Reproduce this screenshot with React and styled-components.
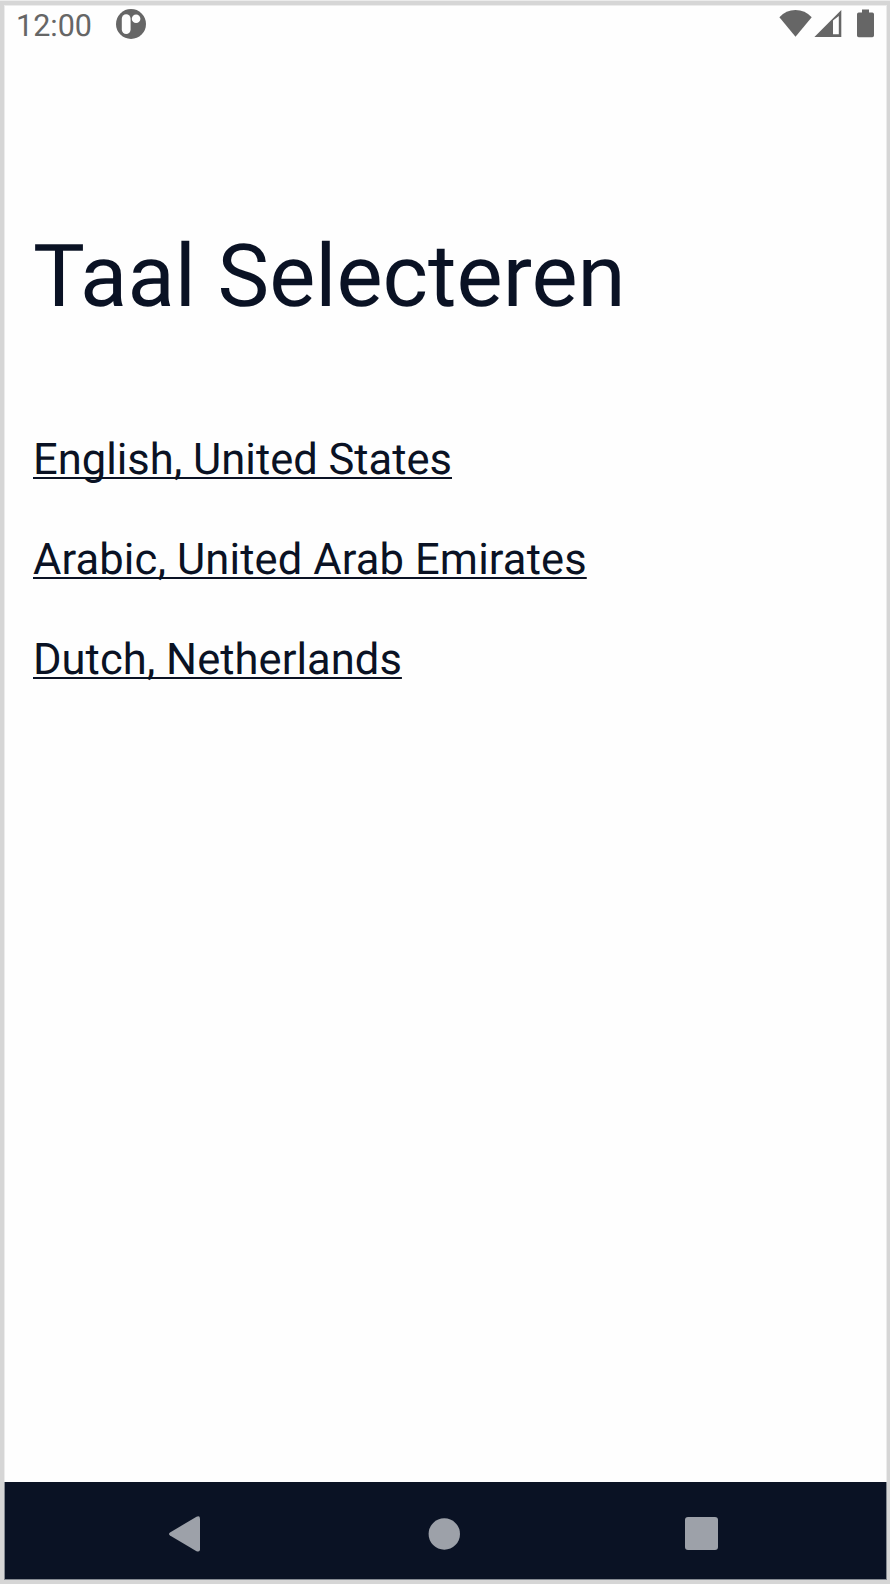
import React from 'react';
import styled, { createGlobalStyle } from 'styled-components';

const Global = createGlobalStyle`
  * { box-sizing: border-box; }
  body { margin: 0; background: #d6d6d6; font-family: Roboto, sans-serif; text-rendering: geometricPrecision; }
`;

const Device = styled.div`
  width: 890px;
  height: 1584px;
  padding: 4px 3px 4px 4px;
  border-top: 1px solid #ececec;
  background: #d6d6d6;
  display: flex;
`;

const Screen = styled.div`
  flex: 1;
  display: flex;
  flex-direction: column;
  background: #fefefe;
  border: 1px solid #ececec;
  border-bottom: 0;
`;

const StatusBar = styled.header`
  height: 40px;
  padding: 0 11px;
  display: flex;
  justify-content: space-between;
  color: #666;
`;

const StatusGroup = styled.div`
  display: flex;
  align-items: flex-start;
`;

const Clock = styled.span`
  width: 99px;
  font-size: 30.5px;
  line-height: 42px;
`;

const StatusIcon = styled.svg`
  display: block;
  flex: none;
  fill: currentColor;
`;

const Content = styled.main`
  flex: 1;
  padding: 181px 28px 0;
  color: #0a1224;
`;

const Title = styled.h1`
  margin: 0 0 107px;
  font-size: 87px;
  font-weight: 400;
  line-height: 100px;
`;

const LanguageList = styled.nav`
  display: flex;
  flex-direction: column;
  align-items: flex-start;
  gap: 48px;
`;

const LanguageLink = styled.a`
  font-size: 43.5px;
  line-height: 52px;
  letter-spacing: ${({ $tracking }) => $tracking || 0}px;
  color: inherit;
  white-space: nowrap;
  text-decoration: underline;
  text-decoration-thickness: 2px;
  text-decoration-skip-ink: none;
  text-underline-offset: 3px;
`;

const NavBar = styled.footer`
  height: 98px;
  margin: 0 -1px;
  border: solid #858a92;
  border-width: 0 1px 1px;
  background: #0a1224;
  color: #9da1a9;
  display: grid;
  grid-template-columns: 259px 257px 33px;
  align-items: center;
  padding: 6px 0 0 164px;
`;

const NavButton = styled.button`
  border: 0;
  padding: 0;
  background: none;
  color: inherit;
  display: flex;
`;

const languages = [
  { name: 'English, United States' },
  { name: 'Arabic, United Arab Emirates', tracking: 0.12 },
  { name: 'Dutch, Netherlands', tracking: 0.04 },
];

export default function App() {
  return (
    <>
      <Global />
      <Device>
        <Screen>
          <StatusBar>
            <StatusGroup>
              <Clock>12:00</Clock>
              <StatusIcon width="32" height="36" viewBox="115 6 32 36">
                <circle cx="131" cy="24" r="15" />
                <rect x="121.8" y="14.3" width="8.8" height="19.7" rx="4.4" fill="#fefefe" />
                <circle cx="136.1" cy="18.7" r="4.3" fill="#fefefe" />
              </StatusIcon>
            </StatusGroup>
            <StatusGroup>
              <StatusIcon width="96" height="36" viewBox="779 6 96 36">
                <path d="M779.4 17.2Q786 10 795.5 10T811.7 17.2L795.5 36.7Z" />
                <path fillRule="evenodd" d="M814.4 37L841.3 10V37ZM833 20.5V34.3H838.8V16Z" />
                <path d="M862 9.5h7v3h3.3q1.7 0 1.7 1.7v21.2q0 1.8-1.7 1.8h-13.6q-1.7 0-1.7-1.8V14.2q0-1.7 1.7-1.7H862Z" />
              </StatusIcon>
            </StatusGroup>
          </StatusBar>
          <Content>
            <Title>Taal Selecteren</Title>
            <LanguageList>
              {languages.map(({ name, tracking }) => (
                <LanguageLink key={name} href="#" $tracking={tracking}>{name}</LanguageLink>
              ))}
            </LanguageList>
          </Content>
          <NavBar>
            <NavButton aria-label="Back">
              <StatusIcon width="32" height="36" viewBox="0 0 32 36">
                <path d="M1 16.4L27.5 .8Q31 -.7 31 2.7V33.3Q31 36.6 27.5 35.2L1 19.6Q-1 18 1 16.4Z" />
              </StatusIcon>
            </NavButton>
            <NavButton aria-label="Home">
              <StatusIcon width="32" height="32" viewBox="0 0 32 32">
                <circle cx="16.3" cy="16" r="15.7" />
              </StatusIcon>
            </NavButton>
            <NavButton aria-label="Overview">
              <StatusIcon width="33" height="33" viewBox="0 0 33 33">
                <rect width="33" height="33" rx="3" />
              </StatusIcon>
            </NavButton>
          </NavBar>
        </Screen>
      </Device>
    </>
  );
}
